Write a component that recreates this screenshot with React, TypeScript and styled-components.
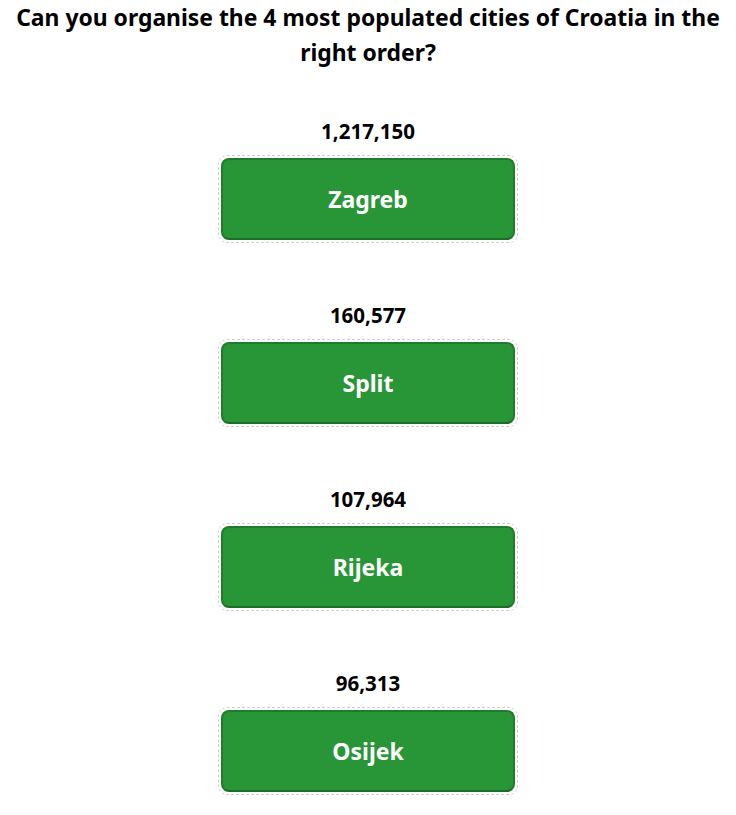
import React from 'react';
import styled, { createGlobalStyle } from 'styled-components';

const GlobalStyle = createGlobalStyle`
  html, body {
    margin: 0;
    padding: 0;
    background: #ffffff;
  }
  body {
    font-family: 'Noto Sans', 'Open Sans', sans-serif;
    color: #000;
  }
`;

const Page = styled.div`
  display: flex;
  flex-direction: column;
  align-items: center;
  padding: 0 10px 20px;
`;

const Title = styled.h1`
  margin: 0 0 49px;
  font-size: 22.9px;
  line-height: 35px;
  font-weight: 700;
  text-align: center;
`;

const List = styled.div`
  display: flex;
  flex-direction: column;
  align-items: center;
  gap: 60px;
`;

const Item = styled.div`
  display: flex;
  flex-direction: column;
  align-items: center;
  gap: 12px;
`;

const Population = styled.div`
  font-size: 20.5px;
  line-height: 24px;
  font-weight: 700;
`;

const Slot = styled.div`
  width: 300px;
  height: 88px;
  box-sizing: border-box;
  padding: 2px;
  border: 1px dashed #cfcfcf;
  border-radius: 9px;
`;

const CityButton = styled.div`
  height: 100%;
  box-sizing: border-box;
  display: flex;
  align-items: center;
  justify-content: center;
  background: #289637;
  border: 2px solid #1f7c2d;
  border-bottom-color: #1b6f28;
  border-radius: 8px;
  color: #ffffff;
  font-size: 23px;
  font-weight: 700;
`;

const cities = [
  { name: 'Zagreb', population: '1,217,150' },
  { name: 'Split', population: '160,577' },
  { name: 'Rijeka', population: '107,964' },
  { name: 'Osijek', population: '96,313' },
];

const App: React.FC = () => {
  return (
    <>
      <GlobalStyle />
      <Page>
        <Title>
          Can you organise the 4 most populated cities of Croatia in the right order?
        </Title>
        <List>
          {cities.map(city => (
            <Item key={city.name}>
              <Population>{city.population}</Population>
              <Slot>
                <CityButton>{city.name}</CityButton>
              </Slot>
            </Item>
          ))}
        </List>
      </Page>
    </>
  );
};

export default App;
